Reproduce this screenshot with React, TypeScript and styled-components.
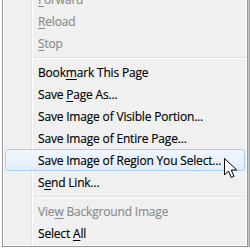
import styled, { createGlobalStyle } from 'styled-components';

const GlobalStyle = createGlobalStyle`
  html, body {
    margin: 0;
    padding: 0;
    background: #ffffff;
    overflow: hidden;
  }
  body {
    font-family: "Open Sans", "Noto Sans", "Liberation Sans", sans-serif;
  }
`;

const Screen = styled.div`
  position: relative;
  width: 250px;
  height: 250px;
  overflow: hidden;
  box-sizing: border-box;
  padding-left: 2px;
  background: #ffffff;
`;

// win7 style context menu, top row scrolled off the shot
const Menu = styled.div`
  box-sizing: border-box;
  width: 246px;
  margin-top: -15px;
  padding: 2px 2px 2px 1px;
  border: 1px solid #979797;
  box-shadow: 1px 0 0 #c8c8c8, 2px 0 0 #a5a5a5, inset 1px 1px 0 #fbfbfb, inset -1px -1px 0 #fbfbfb;
  background: linear-gradient(
    to right,
    #f0f0f0 0 28px,
    #e2e3e3 28px 29px,
    #ffffff 29px 30px,
    #f0f0f0 30px
  );
`;

const Item = styled.div<{ $disabled?: boolean; $hover?: boolean }>`
  box-sizing: border-box;
  height: 22px;
  margin-left: 1px;
  padding-left: 32px;
  display: flex;
  align-items: center;
  font-size: 12px;
  letter-spacing: -0.18px;
  white-space: nowrap;
  color: ${p => (p.$disabled ? '#8b8b8b' : '#000000')};
  border: 1px solid ${p => (p.$hover ? '#a9cdf3' : 'transparent')};
  border-radius: 3px;
  background: ${p => (p.$hover ? 'linear-gradient(#f1f6fd, #e3edfa)' : 'transparent')};
`;

const Label = styled.span`
  white-space: pre;
  -webkit-text-stroke: 0.15px currentColor;
`;

const Key = styled.span`
  text-decoration: underline;
  text-underline-offset: 2px;
`;

const Separator = styled.div`
  height: 2px;
  margin: 3px 0 2px 30px;
  background: linear-gradient(#e0e0e0 0 1px, #ffffff 1px 2px);
`;

const Cursor = styled.svg`
  position: absolute;
  left: 224px;
  top: 158px;
`;

export default function App() {
  return (
    <>
      <GlobalStyle />
      <Screen>
        <Menu>
          <Item $disabled><Label><Key>F</Key>orward</Label></Item>
          <Item $disabled><Label><Key>R</Key>eload</Label></Item>
          <Item $disabled><Label><Key>S</Key>top</Label></Item>
          <Separator />
          <Item><Label>Book<Key>m</Key>ark This Page</Label></Item>
          <Item><Label>Save <Key>P</Key>age As...</Label></Item>
          <Item><Label>Save Image of Visible Portion...</Label></Item>
          <Item><Label>Save Image of Entire Page...</Label></Item>
          <Item $hover><Label>Save Image of Region You Select...</Label></Item>
          <Item><Label>S<Key>e</Key>nd Link...</Label></Item>
          <Separator />
          <Item $disabled><Label>Vie<Key>w</Key> Background Image</Label></Item>
          <Item><Label>Select <Key>A</Key>ll</Label></Item>
        </Menu>
        <Cursor width="14" height="21" viewBox="0 0 14 21">
          <path
            d="M0.5 0.5 L0.5 17 L4.5 13 L7.3 19.5 L10 18.3 L7.3 12 L12.8 12 Z"
            fill="#ffffff"
            stroke="#000000"
            strokeWidth="1"
            strokeLinejoin="miter"
          />
        </Cursor>
      </Screen>
    </>
  );
}
